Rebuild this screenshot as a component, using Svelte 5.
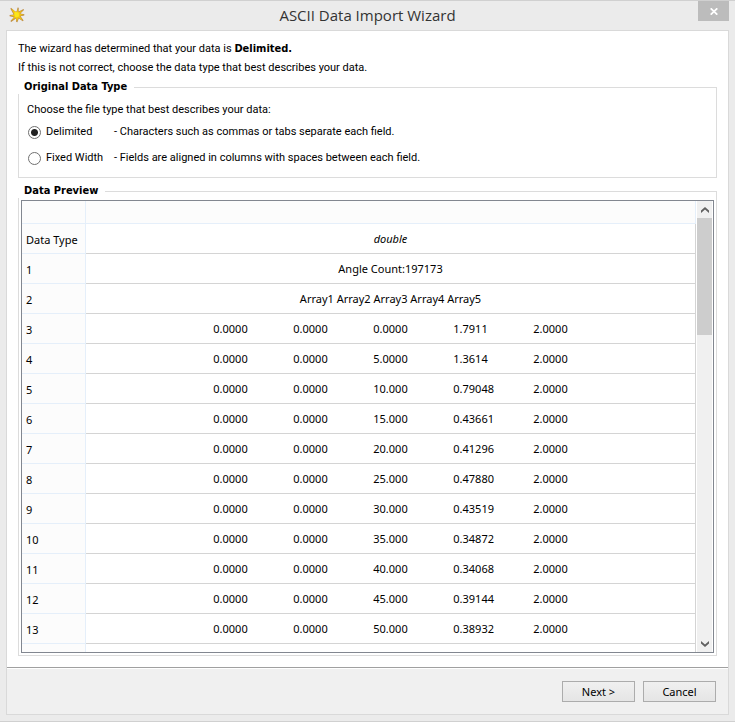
<script>
  let fileType = $state('delimited');

  const rows = [
    ['0.0000', '1.7911'],
    ['5.0000', '1.3614'],
    ['10.000', '0.79048'],
    ['15.000', '0.43661'],
    ['20.000', '0.41296'],
    ['25.000', '0.47880'],
    ['30.000', '0.43519'],
    ['35.000', '0.34872'],
    ['40.000', '0.34068'],
    ['45.000', '0.39144'],
    ['50.000', '0.38932'],
  ].map(([angle, value]) => ['0.0000', '0.0000', angle, value, '2.0000']);
</script>

<div class="window">
  <header class="titlebar">
    <svg class="logo" width="16" height="16" viewBox="0 0 16 16" aria-hidden="true">
      <path d="M2 .8 6.2 4.4 7.6 4.4 8.6 .6 9.8 .8 9.6 4.6 14.6 2 15 3 11.4 6.6 15.4 7.2 15.2 8.4 11.6 9.2 14.6 13.4 13.8 14.2 9.8 11.4 8.4 15.2 7.2 15 7 11.4 2.2 15 1.4 14 4.8 10.2 .6 9.2 .6 8 4.6 7.4 1.4 1.8Z" fill="#bd8d48" />
      <path d="M2.4 1.4 6.6 4.8 8 4.8 9 1.4 9.4 5.4 14 2.8 10.8 6.8 14.4 7.7 10.8 9 13.8 13.4 9.4 10.8 7.9 14.4 6.8 10.6 2.4 14 5.4 9.8 1.4 8.6 5.2 7.8Z" fill="#f2c511" />
      <path d="M5.6 4.8 9.8 5.4 10 9.4 6.4 10.4 5.4 7.6Z" fill="#fbe619" />
    </svg>
    <h1>ASCII Data Import Wizard</h1>
    <button class="close" aria-label="Close">
      <svg width="8" height="7" viewBox="0 0 8 7"><path d="M.7 .3 7.3 6.7M7.3 .3 .7 6.7" stroke="#fff" stroke-width="1.7" /></svg>
    </button>
  </header>

  <div class="panel">
    <main>
      <p>The wizard has determined that your data is <b>Delimited.</b></p>
      <p>If this is not correct, choose the data type that best describes your data.</p>

      <fieldset class="types">
        <legend>Original Data Type</legend>
        <p>Choose the file type that best describes your data:</p>
        <label>
          <input type="radio" name="type" value="delimited" bind:group={fileType} />
          <span class="name">Delimited</span>
          <span>- Characters such as commas or tabs separate each field.</span>
        </label>
        <label>
          <input type="radio" name="type" value="fixed" bind:group={fileType} />
          <span class="name">Fixed Width</span>
          <span>- Fields are aligned in columns with spaces between each field.</span>
        </label>
      </fieldset>

      <fieldset class="preview">
        <legend>Data Preview</legend>
        <div class="viewport">
          <div class="sheet">
            <table>
              <thead>
                <tr><th></th><th></th></tr>
              </thead>
              <tbody>
                <tr><th scope="row">Data Type</th><td><i>double</i></td></tr>
                <tr><th scope="row">1</th><td>Angle Count:197173</td></tr>
                <tr><th scope="row">2</th><td>Array1 Array2 Array3 Array4 Array5</td></tr>
                {#each rows as row, i}
                  <tr>
                    <th scope="row">{i + 3}</th>
                    <td>
                      <div class="fields">
                        {#each row as field}<span>{field}</span>{/each}
                      </div>
                    </td>
                  </tr>
                {/each}
                <tr><th></th><td></td></tr>
              </tbody>
            </table>
          </div>
          <div class="scrollbar">
            <button aria-label="Scroll up">
              <svg width="8" height="6" viewBox="0 0 8 6"><path d="M0 3.6 4 0 8 3.6V6L4 2.6 0 6Z" fill="#606060" /></svg>
            </button>
            <div class="track"><div class="thumb"></div></div>
            <button aria-label="Scroll down">
              <svg width="8" height="6" viewBox="0 0 8 6"><path d="M0 2.4 4 6 8 2.4V0L4 3.4 0 0Z" fill="#606060" /></svg>
            </button>
          </div>
        </div>
      </fieldset>
    </main>

    <footer>
      <button class="action">Next &gt;</button>
      <button class="action">Cancel</button>
    </footer>
  </div>
</div>

<style>
  :global(body) {
    background: #ebebeb;
  }
  .window {
    box-sizing: border-box;
    height: 100vh;
    min-height: 480px;
    display: flex;
    flex-direction: column;
    padding: 0 6px 6px;
    border-top: 1px solid #d0d0d0;
    border-bottom: 1px solid #d0d0d0;
    background: #ebebeb;
    color: #000;
    font-family: 'Noto Sans', 'Open Sans', sans-serif;
    font-size: 11px;
    line-height: 14px;
  }
  .titlebar {
    display: grid;
    grid-template-columns: 31px 1fr 31px;
    height: 29px;
    flex: none;
  }
  .logo {
    margin: 6px 0 0 3px;
  }
  h1 {
    margin: 0;
    font: 400 15px/29px 'Open Sans', 'Noto Sans', sans-serif;
    text-align: center;
    color: #333;
  }
  p,
  label {
    font-family: Roboto, 'Noto Sans', sans-serif;
  }
  b,
  legend {
    font-family: 'DejaVu Sans Condensed', 'DejaVu Sans', sans-serif;
    font-weight: bold;
  }
  button {
    font: inherit;
    color: inherit;
    padding: 0;
    border: 0;
  }
  .close {
    width: 31px;
    height: 20px;
    display: flex;
    align-items: center;
    justify-content: center;
    background: #bcbcbc;
  }
  .panel {
    flex: 1;
    min-height: 0;
    display: flex;
    flex-direction: column;
    border: 1px solid #d9d9d9;
    background: #fff;
  }
  main {
    flex: 1;
    min-height: 0;
    display: flex;
    flex-direction: column;
    padding: 11px;
  }
  p {
    height: 14px;
    margin: 0 0 5px;
  }
  fieldset {
    min-width: 0;
    margin: 0;
    padding: 0;
    border: 1px solid #dcdcdc;
  }
  legend {
    margin-left: -1px;
    padding: 0 7px 0 6px;
    background: #fff;
  }
  .types {
    height: 98px;
    box-sizing: border-box;
    padding: 9px 8px 0;
  }
  .types legend {
    margin-left: -9px;
  }
  .types p {
    margin-bottom: 8px;
  }
  label {
    display: flex;
    align-items: center;
    height: 14px;
    margin-bottom: 12px;
  }
  .name {
    width: 68px;
  }
  input {
    appearance: none;
    box-sizing: border-box;
    width: 13px;
    height: 13px;
    margin: 0 5px 0 1px;
    border: 1px solid #707070;
    border-radius: 50%;
    background: #fff;
  }
  input:checked {
    background: radial-gradient(circle, #222 3px, #fff 4px);
  }
  .preview {
    flex: 1;
    min-height: 0;
    margin-top: 6px;
    padding: 2px;
  }
  .preview legend {
    margin-left: -3px;
  }
  .viewport {
    box-sizing: border-box;
    height: 100%;
    display: flex;
    border: 1px solid #828790;
  }
  .sheet {
    flex: 1;
    overflow: hidden;
  }
  table {
    width: 100%;
    table-layout: fixed;
    border-collapse: separate;
    border-spacing: 0;
  }
  th,
  td {
    box-sizing: border-box;
    height: 30px;
    padding: 0;
    border-right: 1px solid #d4d4d4;
    border-bottom: 1px solid #d4d4d4;
    text-align: center;
  }
  th {
    padding: 3px 0 0 4px;
    border-color: #e5effa;
    background: #fcfcfc;
    font-weight: 400;
    text-align: left;
  }
  th:first-child {
    width: 64px;
  }
  thead th {
    height: 23px;
  }
  .fields {
    display: grid;
    grid-template-columns: repeat(4, 80px) auto;
    justify-content: center;
    text-align: left;
  }
  .scrollbar {
    width: 17px;
    box-sizing: border-box;
    padding: 0 1px;
    display: flex;
    flex-direction: column;
  }
  .scrollbar button {
    height: 17px;
    flex: none;
    display: flex;
    align-items: center;
    justify-content: center;
    background: #f0f0f0;
  }
  .track {
    flex: 1;
    background: #f0f0f0;
  }
  .thumb {
    height: 28%;
    background: #cdcdcd;
  }
  footer {
    flex: none;
    display: flex;
    justify-content: flex-end;
    gap: 8px;
    padding: 13px 12px 12px;
    border-top: 1px solid #a0a0a0;
    box-shadow: inset 0 1px #fff;
    background: #f0f0f0;
  }
  .action {
    width: 73px;
    height: 21px;
    border: 1px solid #acacac;
    background: linear-gradient(#f0f0f0, #e5e5e5);
  }
</style>
